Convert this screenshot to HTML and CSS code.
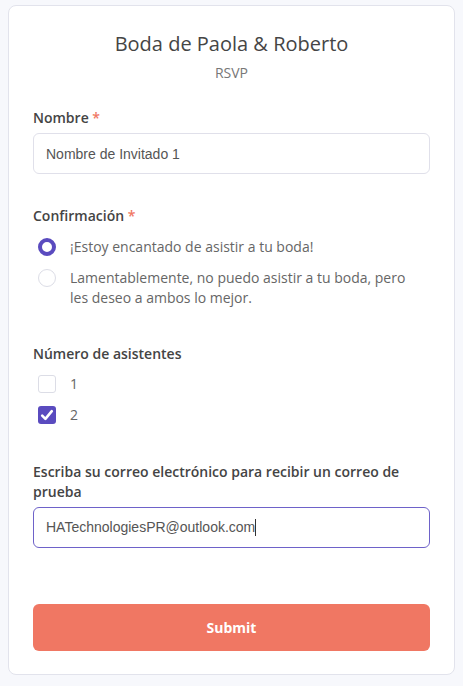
FILE: index.html
```html
<!DOCTYPE html>
<html lang="es">
<head>
    <meta charset="UTF-8">
    <meta name="viewport" content="width=device-width, initial-scale=1.0">
    <title>Boda de Paola &amp; Roberto - RSVP</title>
    <link rel="stylesheet" href="styles.css">
</head>
<body>
    <!-- RSVP card -->
    <form class="card">
        <div class="card-header">
            <h1>Boda de Paola &amp; Roberto</h1>
            <p class="subtitle">RSVP</p>
        </div>

        <!-- Nombre -->
        <div class="field field-name">
            <label class="field-label" for="nombre">Nombre <span class="req">*</span></label>
            <input class="text-input" id="nombre" type="text" value="Nombre de Invitado 1">
        </div>

        <!-- Confirmación -->
        <div class="field field-confirm">
            <div class="field-label">Confirmación <span class="req">*</span></div>
            <div class="options">
                <label class="option">
                    <span class="radio checked"></span>
                    <span class="option-text">¡Estoy encantado de asistir a tu boda!</span>
                </label>
                <label class="option">
                    <span class="radio"></span>
                    <span class="option-text">Lamentablemente, no puedo asistir a tu boda, pero les deseo a ambos lo mejor.</span>
                </label>
            </div>
        </div>

        <!-- Número de asistentes -->
        <div class="field field-count">
            <div class="field-label">Número de asistentes</div>
            <div class="options">
                <label class="option">
                    <span class="checkbox"></span>
                    <span class="option-text">1</span>
                </label>
                <label class="option">
                    <span class="checkbox checked">
                        <svg viewBox="0 0 18 18" width="18" height="18">
                            <path d="M4.2 9.6 L7.4 12.8 L13.8 5.2" fill="none" stroke="#fff" stroke-width="2.6" stroke-linecap="round" stroke-linejoin="round"/>
                        </svg>
                    </span>
                    <span class="option-text">2</span>
                </label>
            </div>
        </div>

        <!-- Correo -->
        <div class="field field-email">
            <label class="field-label" for="correo">Escriba su correo electrónico para recibir un correo de prueba</label>
            <div class="text-input focused" id="correo">HATechnologiesPR@outlook.com<span class="caret"></span></div>
        </div>

        <button class="submit-btn" type="button">Submit</button>
    </form>
</body>
</html>
```

FILE: styles.css
```css
/* Page */
body {
    margin: 0;
    padding: 5px 8px 10px;
    background-color: #f7f8fc;
    font-family: "Open Sans", Arial, sans-serif;
    color: #444;
}

/* Card */
.card {
    display: block;
    background-color: #fff;
    border: 1px solid #e2e3ec;
    border-radius: 8px;
    padding: 24px 24px 23px;
}

.card-header {
    text-align: center;
}

.card-header h1 {
    margin: 0;
    font-size: 20px;
    line-height: 28px;
    font-weight: 400;
    color: #454545;
}

.subtitle {
    margin: 5px 0 0;
    font-size: 14px;
    line-height: 20px;
    color: #777;
}

/* Fields */
.field-name { margin-top: 25px; }
.field-confirm { margin-top: 32px; }
.field-count { margin-top: 36px; }
.field-email { margin-top: 37px; }

.field-label {
    display: block;
    font-size: 14px;
    line-height: 20px;
    font-weight: 600;
    color: #444;
    margin-bottom: 5px;
}

.req {
    color: #f07763;
}

.text-input {
    display: block;
    box-sizing: border-box;
    width: 100%;
    height: 41px;
    padding: 0 12px;
    border: 1px solid #e0e0ea;
    border-radius: 6px;
    font-family: "Liberation Sans", Arial, sans-serif;
    font-size: 14px;
    line-height: 39px;
    color: #555;
    background: #fff;
    outline: none;
}

.text-input.focused {
    border-color: #6e62c9;
}

.caret {
    display: inline-block;
    width: 1px;
    height: 17px;
    background-color: #333;
    vertical-align: -4px;
}

/* Radio and checkbox options */
.options {
    display: flex;
    flex-direction: column;
    gap: 11px;
    padding-left: 5px;
    margin-top: 11px;
}

.field-count .options {
    margin-top: 10px;
}

.option {
    display: flex;
    align-items: flex-start;
    gap: 13px;
    font-size: 14px;
    line-height: 20px;
    color: #666;
    padding-right: 20px;
}

.radio {
    flex: none;
    box-sizing: border-box;
    width: 18px;
    height: 18px;
    margin-top: 1px;
    border: 1px solid #dcdde6;
    border-radius: 50%;
    background: #fff;
}

.radio.checked {
    border: 4px solid #5a4bbf;
}

.checkbox {
    flex: none;
    box-sizing: border-box;
    width: 18px;
    height: 18px;
    margin-top: 1px;
    border: 1px solid #dcdde6;
    border-radius: 3px;
    background: #fff;
}

.checkbox.checked {
    border: none;
    background-color: #5a4bbf;
}

.checkbox svg {
    display: block;
}

.option-text {
    padding-left: 1px;
}

/* Submit */
.submit-btn {
    display: block;
    width: 100%;
    height: 47px;
    margin-top: 56px;
    border: none;
    border-radius: 6px;
    background-color: #f07763;
    color: #fff;
    font-family: "Open Sans", Arial, sans-serif;
    font-size: 14px;
    font-weight: 700;
    cursor: pointer;
}
```
